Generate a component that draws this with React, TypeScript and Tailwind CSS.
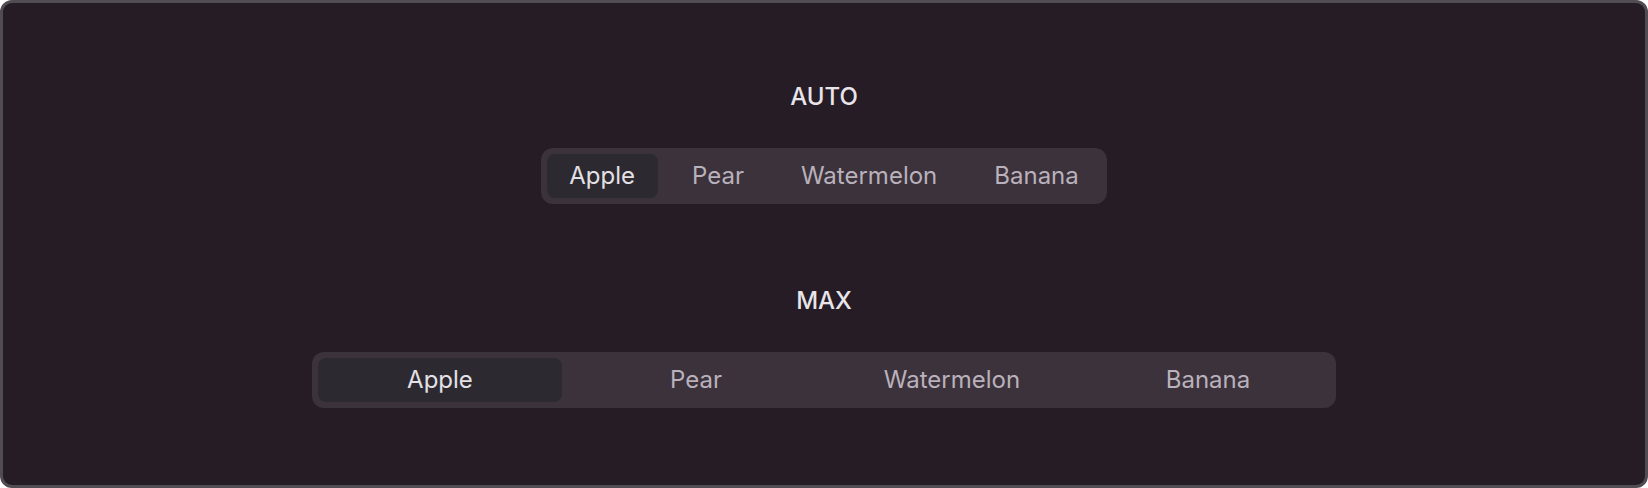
import React from 'react';

const FRUITS = ['Apple', 'Pear', 'Watermelon', 'Banana'];

interface SegmentedProps {
  items: string[];
  mode: 'auto' | 'max';
}

const Segmented: React.FC<SegmentedProps> = ({ items, mode }) => {
  const [active, setActive] = React.useState(0);
  const isMax = mode === 'max';

  return (
    <div
      className={
        'flex gap-3 rounded-xl bg-[#3c323c] p-1.5 ' + (isMax ? 'w-[1024px]' : 'w-fit')
      }
    >
      {items.map((item, i) => (
        <button
          key={item}
          onClick={() => setActive(i)}
          className={
            'h-11 rounded-lg px-[22.5px] text-[24px] leading-8 ' +
            (isMax ? 'flex-1 ' : '') +
            (i === active ? 'bg-[#2c2a30] text-[#e4e0e6]' : 'text-[#b9b1bb]')
          }
        >
          {item}
        </button>
      ))}
    </div>
  );
};

export default function App() {
  return (
    <div
      className="h-[488px] w-[1648px] overflow-hidden rounded-xl border-[3px] border-[#514c54] bg-[#251c25]"
      style={{ fontFamily: 'Inter, "Noto Sans", sans-serif' }}
    >
      <div className="flex flex-col items-center pt-[78px]">
        {/* AUTO */}
        <div className="mb-[35px] text-[24px] font-medium leading-8 text-[#e8e4ea]">AUTO</div>
        <Segmented items={FRUITS} mode="auto" />

        {/* MAX */}
        <div className="mt-[81px] mb-[35px] text-[24px] font-medium leading-8 text-[#e8e4ea]">MAX</div>
        <Segmented items={FRUITS} mode="max" />
      </div>
    </div>
  );
}
